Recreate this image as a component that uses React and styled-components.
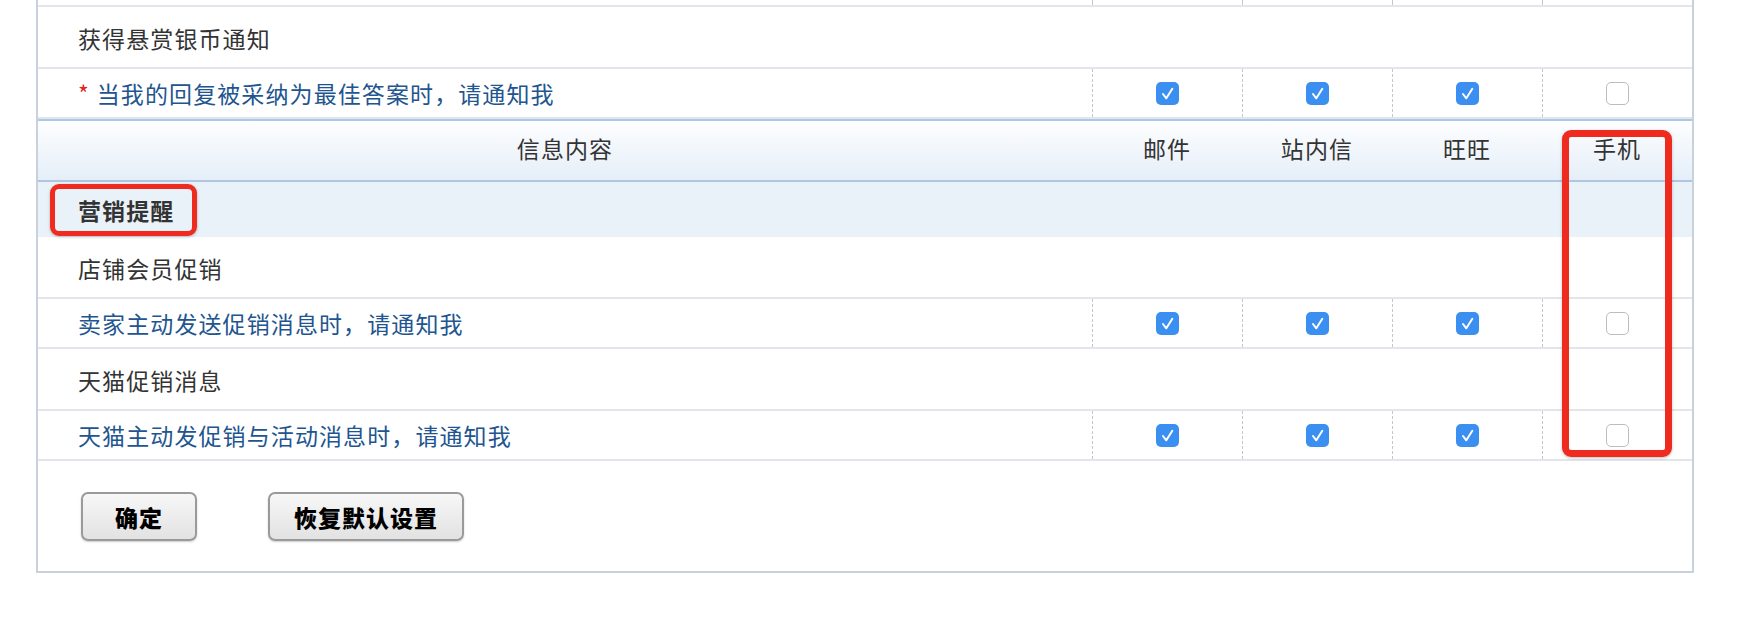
import React from 'react';
import styled, { createGlobalStyle } from 'styled-components';

const GlobalStyle = createGlobalStyle`
    body {
        margin: 0;
        background: #ffffff;
        font-family: "Noto Sans CJK SC", "Noto Sans", sans-serif;
    }
`;

const Panel = styled.div`
    position: relative;
    width: 1658px;
    margin-left: 36px;
    box-sizing: border-box;
    border: 2px solid #c8d2dd;
    border-top: none;
    background: #fff;
`;

const Row = styled.div`
    display: grid;
    grid-template-columns: 1054px repeat(4, 150px);
    height: ${p => p.$h}px;
    box-sizing: border-box;
    border-bottom: 2px solid #e2e5e9;
`;

const TitleCell = styled.div`
    grid-column: 1 / -1;
    display: flex;
    align-items: center;
    padding: 2px 0 0 40px;
    font-size: 23px;
    letter-spacing: 1.1px;
    color: #333;
`;

const TextCell = styled.div`
    display: flex;
    align-items: center;
    padding-left: 40px;
    font-size: 23px;
    letter-spacing: 1.1px;
    color: #22558f;
`;

const Star = styled.span`
    color: #e0231c;
    margin-right: 8px;
    letter-spacing: 0;
`;

const CheckCell = styled.div`
    display: flex;
    align-items: center;
    justify-content: center;
    border-left: 1px dashed #c6c6c6;
`;

const Box = styled.span`
    display: inline-flex;
    align-items: center;
    justify-content: center;
    width: 23px;
    height: 23px;
    box-sizing: border-box;
    border-radius: 5px;
    background: ${p => (p.$on ? '#3a8ff0' : '#ffffff')};
    border: ${p => (p.$on ? 'none' : '1px solid #bdbdbd')};
`;

const Header = styled.div`
    display: grid;
    grid-template-columns: 1054px repeat(4, 150px);
    height: 63px;
    padding-bottom: 5px;
    box-sizing: border-box;
    border-top: 2px solid #abc8e8;
    border-bottom: 2px solid #aec6e0;
    background: linear-gradient(#fdfeff, #e5eef8);
`;

const HeadCell = styled.div`
    display: flex;
    align-items: center;
    justify-content: center;
    font-size: 23px;
    letter-spacing: 1.1px;
    color: #333;
`;

const Section = styled.div`
    position: relative;
    display: flex;
    align-items: center;
    height: 55px;
    padding-left: 40px;
    background: #e9f1f9;
    font-size: 23px;
    letter-spacing: 1.1px;
    font-weight: 700;
    color: #333;
`;

const Highlight = styled.div`
    position: absolute;
    box-sizing: border-box;
    left: ${p => p.$x}px;
    top: ${p => p.$y}px;
    width: ${p => p.$w}px;
    height: ${p => p.$hh}px;
    border: ${p => p.$b}px solid #ef2a1f;
    border-radius: 9px;
    box-shadow: 0 1px 3px rgba(0, 0, 0, 0.25);
    pointer-events: none;
`;

const Footer = styled.div`
    display: flex;
    gap: 71px;
    padding: 31px 0 30px 43px;
`;

const Button = styled.button`
    height: 49px;
    min-width: 116px;
    padding: 0 24px;
    box-sizing: border-box;
    border: 2px solid #9a9a9a;
    border-radius: 7px;
    background: linear-gradient(#f7f7f7, #e2e2e2);
    box-shadow: 0 1px 2px rgba(0, 0, 0, 0.2);
    font-family: "Noto Sans CJK SC", sans-serif;
    font-size: 23px;
    letter-spacing: 1px;
    font-weight: 900;
    color: #000;
`;

function Check({ on }) {
    return (
        <Box $on={on}>
            {on && (
                <svg width="23" height="23" viewBox="0 0 23 23">
                    <path d="M7 12 L10.3 16.3 L16.3 6.8" fill="none" stroke="#fff" strokeWidth="2" strokeLinecap="round" strokeLinejoin="round" />
                </svg>
            )}
        </Box>
    );
}

function CheckRow({ text, star, checks = [], h = 50, empty }) {
    return (
        <Row $h={h}>
            <TextCell>
                {star && <Star>*</Star>}
                {text}
            </TextCell>
            {[0, 1, 2, 3].map(i => (
                <CheckCell key={i}>{!empty && <Check on={checks[i]} />}</CheckCell>
            ))}
        </Row>
    );
}

function TitleRow({ children }) {
    return (
        <Row $h={62}>
            <TitleCell>{children}</TitleCell>
        </Row>
    );
}

export default function App() {
    return (
        <>
            <GlobalStyle />
            <Panel>
                <CheckRow h={7} empty />
                <TitleRow>获得悬赏银币通知</TitleRow>
                <CheckRow star text="当我的回复被采纳为最佳答案时，请通知我" checks={[true, true, true, false]} />
                <Header>
                    <HeadCell>信息内容</HeadCell>
                    <HeadCell>邮件</HeadCell>
                    <HeadCell>站内信</HeadCell>
                    <HeadCell>旺旺</HeadCell>
                    <HeadCell>手机</HeadCell>
                </Header>
                <Section>
                    营销提醒
                    <Highlight $x={12} $y={2} $w={147} $hh={52} $b={5} />
                </Section>
                <TitleRow>店铺会员促销</TitleRow>
                <CheckRow text="卖家主动发送促销消息时，请通知我" checks={[true, true, true, false]} />
                <TitleRow>天猫促销消息</TitleRow>
                <CheckRow text="天猫主动发促销与活动消息时，请通知我" checks={[true, true, true, false]} />
                <Footer>
                    <Button>确定</Button>
                    <Button>恢复默认设置</Button>
                </Footer>
                <Highlight $x={1524} $y={130} $w={110} $hh={327} $b={7} />
            </Panel>
        </>
    );
}
